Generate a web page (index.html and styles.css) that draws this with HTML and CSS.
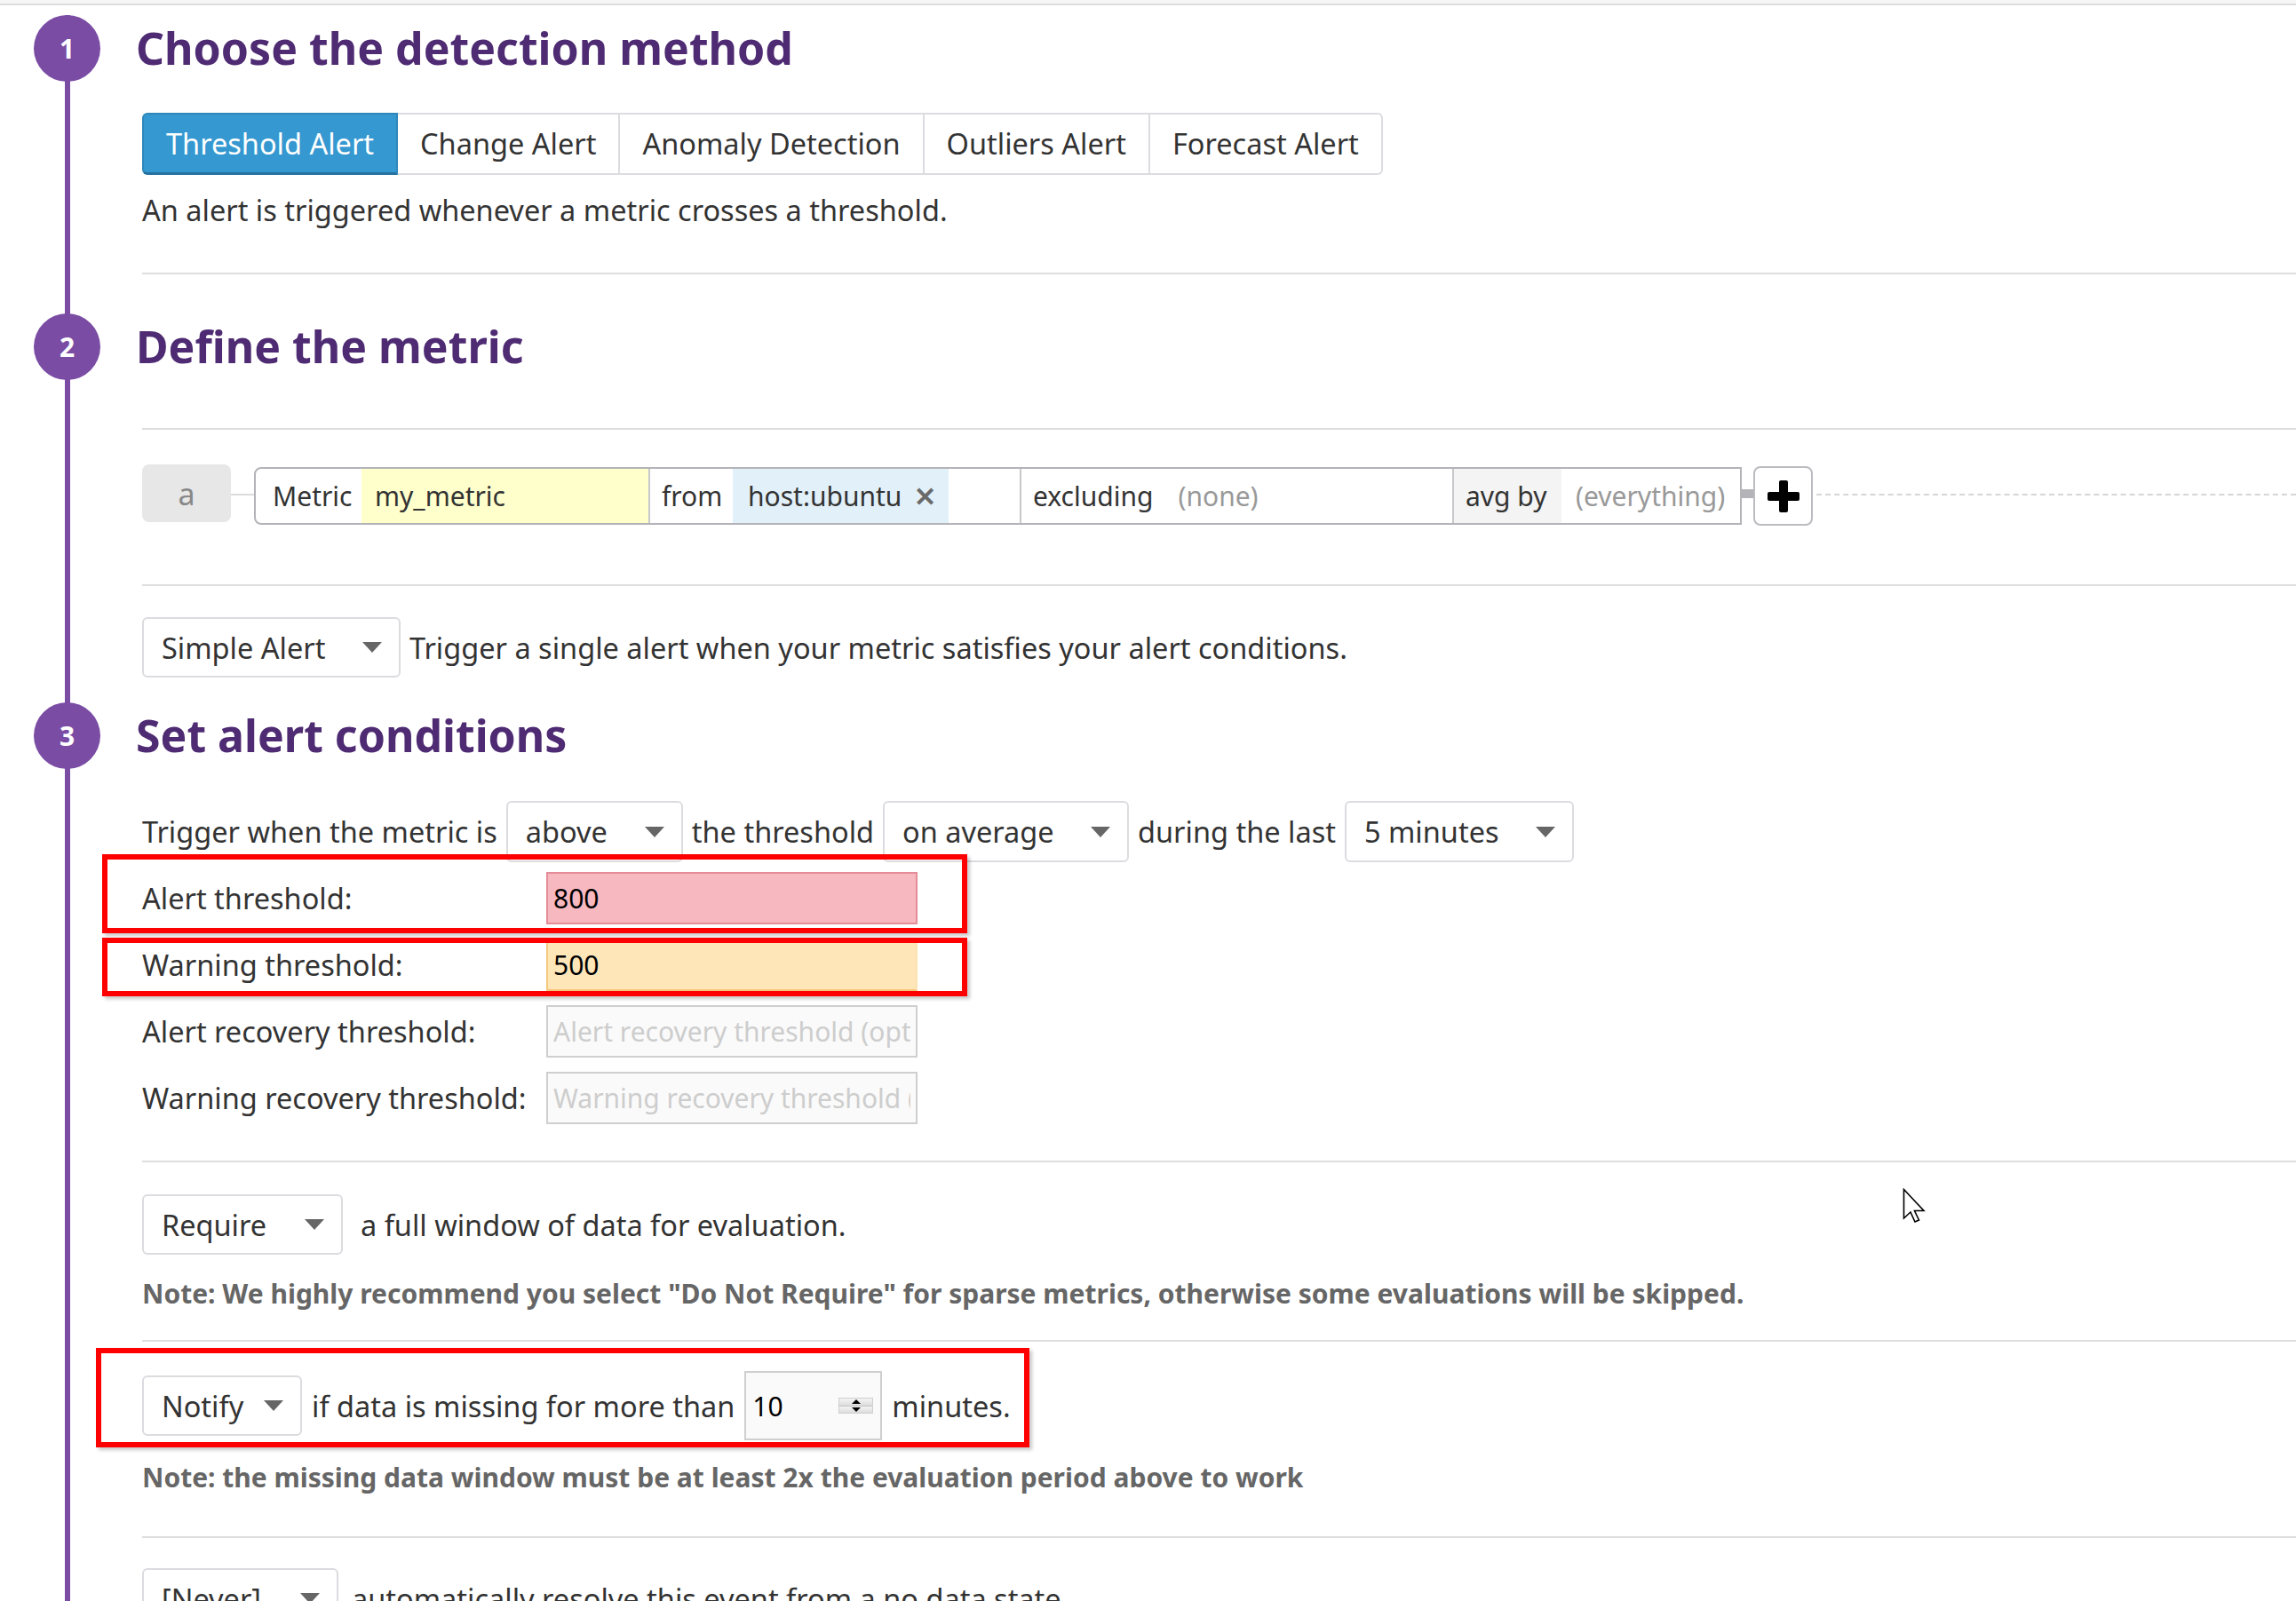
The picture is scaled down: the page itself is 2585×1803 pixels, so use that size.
FILE: index.html
```html
<!DOCTYPE html>
<html lang="en">
<head>
<meta charset="utf-8">
<title>New Monitor</title>
<link rel="stylesheet" href="styles.css">
</head>
<body>
<div class="topbar"></div>
<div class="steps">
  <section class="step step-detect">
    <div class="step-head"><span class="step-num">1</span><h2>Choose the detection method</h2></div>
    <div class="tabs">
      <span class="tab active">Threshold Alert</span>
      <span class="tab">Change Alert</span>
      <span class="tab">Anomaly Detection</span>
      <span class="tab">Outliers Alert</span>
      <span class="tab">Forecast Alert</span>
    </div>
    <p class="desc">An alert is triggered whenever a metric crosses a threshold.</p>
    <div class="sep sep-detect"></div>
  </section>

  <section class="step step-metric">
    <div class="step-head"><span class="step-num">2</span><h2>Define the metric</h2></div>
    <div class="sep sep-metric-top"></div>
    <div class="query-row">
      <span class="q-letter">a</span>
      <span class="q-link"></span>
      <div class="q-box">
        <span class="q-seg q-label">Metric</span>
        <span class="q-seg q-metric">my_metric</span>
        <span class="q-seg q-from">from</span>
        <span class="q-seg q-host">host:ubuntu<span class="q-x">✕</span></span>
        <span class="q-seg q-blank"></span>
        <span class="q-seg q-excl">excluding<span class="q-muted q-none">(none)</span></span>
        <span class="q-seg q-avg">avg by</span>
        <span class="q-seg q-every q-muted">(everything)</span>
      </div>
      <span class="q-stub"></span>
      <span class="q-add">
        <svg width="36" height="36" viewBox="0 0 36 36"><rect x="13" y="0" width="10" height="36" rx="2" fill="#000"/><rect x="0" y="13" width="36" height="10" rx="2" fill="#000"/></svg>
      </span>
      <span class="q-dash"></span>
    </div>
    <div class="sep sep-metric-mid"></div>
    <div class="row row-simple">
      <span class="select sel-simple">Simple Alert<span class="caret"></span></span>
      <span>Trigger a single alert when your metric satisfies your alert conditions.</span>
    </div>
  </section>

  <section class="step step-conditions">
    <div class="step-head"><span class="step-num">3</span><h2>Set alert conditions</h2></div>
    <div class="row row-trigger">
      <span>Trigger when the metric is</span>
      <span class="select sel-above">above<span class="caret"></span></span>
      <span>the threshold</span>
      <span class="select sel-avg">on average<span class="caret"></span></span>
      <span>during the last</span>
      <span class="select sel-mins">5 minutes<span class="caret"></span></span>
    </div>
    <div class="thresholds">
      <div class="thr-row mark mark-alert">
        <label class="thr-label">Alert threshold:</label>
        <input class="thr-input thr-alert" type="text" value="800">
      </div>
      <div class="thr-row mark mark-warn">
        <label class="thr-label">Warning threshold:</label>
        <input class="thr-input thr-warn" type="text" value="500">
      </div>
      <div class="thr-row">
        <label class="thr-label">Alert recovery threshold:</label>
        <input class="thr-input" type="text" placeholder="Alert recovery threshold (optional)">
      </div>
      <div class="thr-row">
        <label class="thr-label">Warning recovery threshold:</label>
        <input class="thr-input" type="text" placeholder="Warning recovery threshold (optional)">
      </div>
    </div>
    <div class="sep sep-thresholds"></div>
    <div class="row row-require">
      <span class="select sel-require">Require<span class="caret"></span></span>
      <span class="after-require">a full window of data for evaluation.</span>
    </div>
    <p class="note note-require">Note: We highly recommend you select "Do Not Require" for sparse metrics, otherwise some evaluations will be skipped.</p>
    <div class="sep sep-require"></div>
    <div class="row row-notify mark mark-notify">
      <span class="select sel-notify">Notify<span class="caret"></span></span>
      <span>if data is missing for more than</span>
      <span class="num">10<span class="spin"><span class="spin-up"></span><span class="spin-down"></span></span></span>
      <span>minutes.</span>
    </div>
    <p class="note note-missing">Note: the missing data window must be at least 2x the evaluation period above to work</p>
    <div class="sep sep-missing"></div>
    <div class="row row-never">
      <span class="select sel-never">[Never]<span class="caret"></span></span>
      <span class="after-never">automatically resolve this event from a no data state.</span>
    </div>
  </section>
</div>
<svg class="cursor" width="28" height="40" viewBox="0 0 28 40"><path d="M1.5 1.5 L1.5 34 L9 27 L14 38 L18.5 36 L13.5 25.5 L24 25.5 Z" fill="#fff" stroke="#000" stroke-width="1.6" stroke-linejoin="miter"/></svg>
</body>
</html>
```

FILE: styles.css
```css
*, *::before, *::after { box-sizing: border-box; }

html, body {
  margin: 0;
  padding: 0;
  background: #fff;
  height: 1803px;
  overflow: hidden;
}

body {
  font-family: "Noto Sans", "Open Sans", sans-serif;
  font-size: 32.5px;
  color: #333;
  position: relative;
}

.topbar {
  height: 6px;
  background: #f6f6f6;
  border-bottom: 2px solid #dedede;
}

.steps {
  margin: 11px 0 0 73px;
  border-left: 6px solid #7a4ca4;
  padding-left: 81px;
}

.step-head {
  display: flex;
  align-items: center;
  height: 75px;
}

.step-num {
  flex: none;
  width: 75px;
  height: 75px;
  border-radius: 50%;
  background: #7a4ca4;
  color: #fff;
  font-weight: 700;
  font-size: 30px;
  display: flex;
  align-items: center;
  justify-content: center;
  margin-left: -122px;
  margin-right: 40px;
}

h2 {
  margin: 0;
  font-size: 50px;
  font-weight: 700;
  line-height: 75px;
  color: #4e2b72;
  white-space: nowrap;
}

/* tabs */
.tabs {
  display: flex;
  width: max-content;
  margin-top: 35px;
  height: 70px;
}

.tab {
  padding: 0 25px;
  line-height: 66px;
  border: 2px solid #dcdce0;
  border-left-width: 0;
  white-space: nowrap;
}

.tab:first-child {
  border-left-width: 2px;
  border-radius: 6px 0 0 6px;
}

.tab:last-child {
  border-radius: 0 6px 6px 0;
}

.tab.active {
  background: #3598d0;
  color: #fff;
  border-color: #2d87ba;
  border-bottom: 3px solid #2572a0;
  line-height: 65px;
}

.desc {
  margin: 17px 0 0;
  line-height: 45px;
}

.sep {
  height: 2px;
  background: #dedede;
}

.sep-detect { margin-top: 48px; }

.step-metric .step-head { margin-top: 44px; }

.sep-metric-top { margin-top: 54px; }

/* query row */
.query-row {
  display: flex;
  align-items: flex-start;
  margin-top: 39px;
  height: 68px;
  font-size: 30px;
}

.q-letter {
  flex: none;
  width: 100px;
  height: 65px;
  background: #e7e7e7;
  border-radius: 8px;
  color: #888;
  font-size: 34px;
  display: flex;
  align-items: center;
  justify-content: center;
}

.q-link {
  flex: none;
  width: 26px;
  height: 2px;
  background: #dcdcdc;
  margin-top: 33px;
}

.q-box {
  flex: none;
  display: flex;
  width: 1675px;
  height: 65px;
  margin-top: 3px;
  border: 2px solid #b4b4b8;
  border-radius: 8px 0 0 8px;
  overflow: hidden;
}

.q-seg {
  display: flex;
  align-items: center;
  white-space: nowrap;
  height: 100%;
  flex: none;
}

.q-label { width: 119px; padding-left: 19px; }
.q-metric { width: 323px; padding-left: 15px; background: #ffffcc; }
.q-from { width: 95px; padding-left: 13px; border-left: 2px solid #c8c8cc; }
.q-host { width: 243px; padding-left: 17px; background: #e2f0f9; }
.q-x { margin-left: 14px; color: #6a6a6a; font-size: 30px; font-weight: 700; line-height: 1; }
.q-blank { width: 80px; }
.q-excl { width: 487px; padding-left: 13px; border-left: 2px solid #c8c8cc; }
.q-none { margin-left: 28px; }
.q-avg { width: 123px; padding-left: 13px; border-left: 2px solid #c8c8cc; background: #f4f4f4; }
.q-every { flex: 1; padding-left: 16px; }
.q-muted { color: #999; }

.q-stub {
  flex: none;
  width: 13px;
  height: 10px;
  background: #b4b4b8;
  margin-top: 28px;
}

.q-add {
  flex: none;
  width: 67px;
  height: 67px;
  margin-top: 2px;
  border: 2px solid #bcbcc0;
  border-radius: 8px;
  display: flex;
  align-items: center;
  justify-content: center;
  background: #fff;
}

.q-dash {
  flex: 1;
  margin: 33px 0 0 4px;
  border-top: 2px dashed #d6d6d6;
}

.sep-metric-mid { margin-top: 67px; }

/* generic rows */
.row {
  display: flex;
  align-items: center;
  gap: 10px;
  white-space: nowrap;
}

.row-simple { margin-top: 35px; height: 68px; }

.select {
  flex: none;
  display: flex;
  align-items: center;
  height: 68px;
  padding: 0 19px 0 20px;
  border: 2px solid #dcdce0;
  border-radius: 6px;
  background: #fff;
  color: #333;
}

.caret {
  margin-left: auto;
  width: 0;
  height: 0;
  border-left: 11.5px solid transparent;
  border-right: 11.5px solid transparent;
  border-top: 12px solid #666;
}

.sel-simple { width: 291px; }
.sel-above { width: 199px; }
.sel-avg { width: 277px; }
.sel-mins { width: 258px; }
.sel-require { width: 226px; }
.sel-notify { width: 180px; }
.sel-never { width: 221px; }

.step-conditions .step-head { margin-top: 28px; }

.row-trigger { margin-top: 36px; height: 69px; }
.row-trigger .select { height: 69px; }

/* thresholds */
.thresholds {
  display: flex;
  flex-direction: column;
  gap: 16px;
  margin-top: 11px;
}

.thr-row {
  position: relative;
  display: flex;
  align-items: center;
  height: 59px;
}

.thr-label {
  flex: none;
  width: 455px;
  white-space: nowrap;
}

.thr-input {
  flex: none;
  width: 418px;
  height: 59px;
  margin: 0;
  padding: 0 6px;
  border: 2px solid #cfcfcf;
  background: #fafafa;
  font-family: "Noto Sans", "Open Sans", sans-serif;
  font-size: 30px;
  color: #000;
  outline: none;
}

.thr-input::placeholder { color: #cdcdcd; }

.thr-alert {
  background: #f8b8c0;
  border-color: #e48c98;
}

.thr-warn {
  background: #fee6b9;
  border-color: #fde3b3;
  border-left-color: #f4c77c;
  border-bottom-color: #f4c77c;
}

/* red annotation boxes over the form */
.mark::after {
  content: "";
  position: absolute;
  border: 6px solid #ff0000;
  box-shadow: 3px 3px 4px rgba(0, 0, 0, 0.22);
  pointer-events: none;
}

.mark-alert::after { left: -45px; top: -20px; width: 974px; height: 89px; }
.mark-warn::after { left: -45px; top: -1px; width: 974px; height: 66px; }

.sep-thresholds { margin-top: 41px; }

.row-require { margin-top: 36px; height: 68px; }
.after-require { margin-left: 10px; }

.note {
  margin: 24px 0 0;
  font-size: 30px;
  font-weight: 700;
  line-height: 40px;
  color: #666;
  white-space: nowrap;
}

.sep-require { margin-top: 32px; }

.row-notify {
  position: relative;
  margin-top: 33px;
  height: 78px;
  width: max-content;
  gap: 11px;
}

.mark-notify::after { left: -52px; top: -26px; width: 1051px; height: 112px; }

.num {
  flex: none;
  display: flex;
  align-items: center;
  width: 155px;
  height: 78px;
  padding-left: 7px;
  border: 2px solid #cfcfcf;
  background: #fafafa;
  font-size: 30px;
  color: #000;
}

.spin {
  margin-left: auto;
  margin-right: 8px;
  width: 39px;
  height: 18px;
  display: flex;
  flex-direction: column;
  border: 1px solid #d0d0d0;
}

.spin-up, .spin-down {
  flex: 1;
  display: flex;
  align-items: center;
  justify-content: center;
  background: linear-gradient(#f4f4f4, #dcdcdc);
}

.spin-up { border-bottom: 1px solid #c4c4c4; }

.spin-up::before {
  content: "";
  border-left: 5px solid transparent;
  border-right: 5px solid transparent;
  border-bottom: 5px solid #000;
}

.spin-down::before {
  content: "";
  border-left: 5px solid transparent;
  border-right: 5px solid transparent;
  border-top: 5px solid #000;
}

.note-missing { margin-top: 22px; }

.sep-missing { margin-top: 46px; }

.row-never { margin-top: 34px; height: 68px; }
.after-never { margin-left: 5px; }

.cursor {
  position: absolute;
  left: 2142px;
  top: 1338px;
}
```
